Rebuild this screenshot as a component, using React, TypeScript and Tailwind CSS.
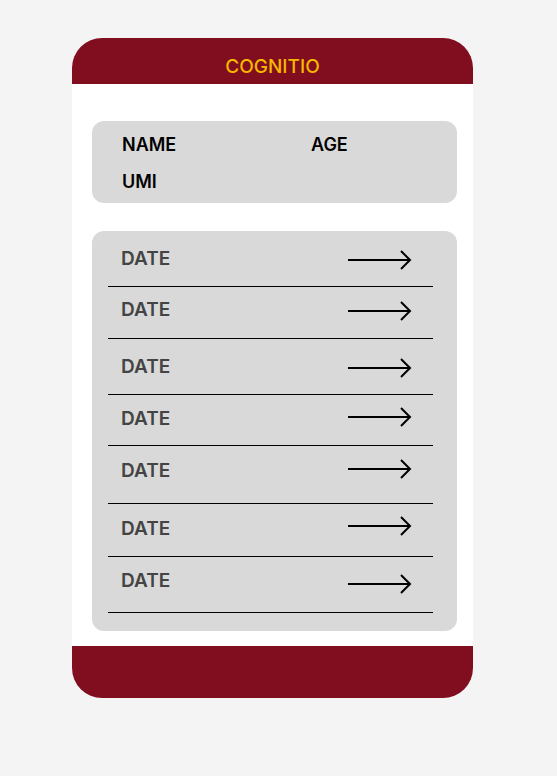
import React from "react";

const rows = [
  { h: "h-[56px]", pt: "pt-[16px]", arrow: "mt-[3px]" },
  { h: "h-[52px]", pt: "pt-[11px]", arrow: "mt-[3px]" },
  { h: "h-[56px]", pt: "pt-[16px]", arrow: "mt-[3px]" },
  { h: "h-[51px]", pt: "pt-[12px]", arrow: "mt-[0px]" },
  { h: "h-[58px]", pt: "pt-[13px]", arrow: "mt-[0px]" },
  { h: "h-[53px]", pt: "pt-[13px]", arrow: "-mt-[1px]" },
  { h: "h-[56px]", pt: "pt-[12px]", arrow: "mt-[5px]" },
];

const Arrow = ({ className }: { className: string }) => (
  <svg width="64" height="20" viewBox="0 0 64 20" fill="none" className={className}>
    <line x1="0" y1="10" x2="62" y2="10" stroke="#000" strokeWidth="2" />
    <polyline points="53,1 62,10 53,19" stroke="#000" strokeWidth="2" fill="none" />
  </svg>
);

const App = () => {
  return (
    <div className="min-h-[776px] w-full bg-[#f4f4f4] pt-[38px] font-['Inter',sans-serif]">
      <div className="ml-[72px] w-[401px] overflow-hidden rounded-[30px] bg-white">
        <div className="flex h-[46px] items-center justify-center bg-[#800e1e] pt-[12px]">
          <span className="text-[19px] font-medium text-[#f5b800]">COGNITIO</span>
        </div>

        <div className="pl-[20px] pr-[16px] pt-[37px] pb-[15px]">
          <div className="h-[82px] rounded-[12px] bg-[#d9d9d9] pl-[30px] pt-[11px]">
            <div className="flex h-[24px] items-center text-[18px] font-semibold text-black">
              <span className="w-[189px]">NAME</span>
              <span>AGE</span>
            </div>
            <div className="mt-[13px] flex h-[24px] items-center text-[18px] font-semibold text-black">
              UMI
            </div>
          </div>

          <div className="mt-[28px] h-[400px] rounded-[12px] bg-[#d9d9d9] pl-[16px] pr-[24px]">
            {rows.map((r, i) => (
              <div
                key={i}
                className={`${r.h} flex items-start justify-between border-b border-black pl-[13px] pr-[21px] ${r.pt}`}
              >
                <span className="text-[19px] leading-[24px] font-semibold text-[#444444]">DATE</span>
                <Arrow className={r.arrow} />
              </div>
            ))}
          </div>
        </div>

        <div className="h-[52px] bg-[#800e1e]" />
      </div>
    </div>
  );
};

export default App;
